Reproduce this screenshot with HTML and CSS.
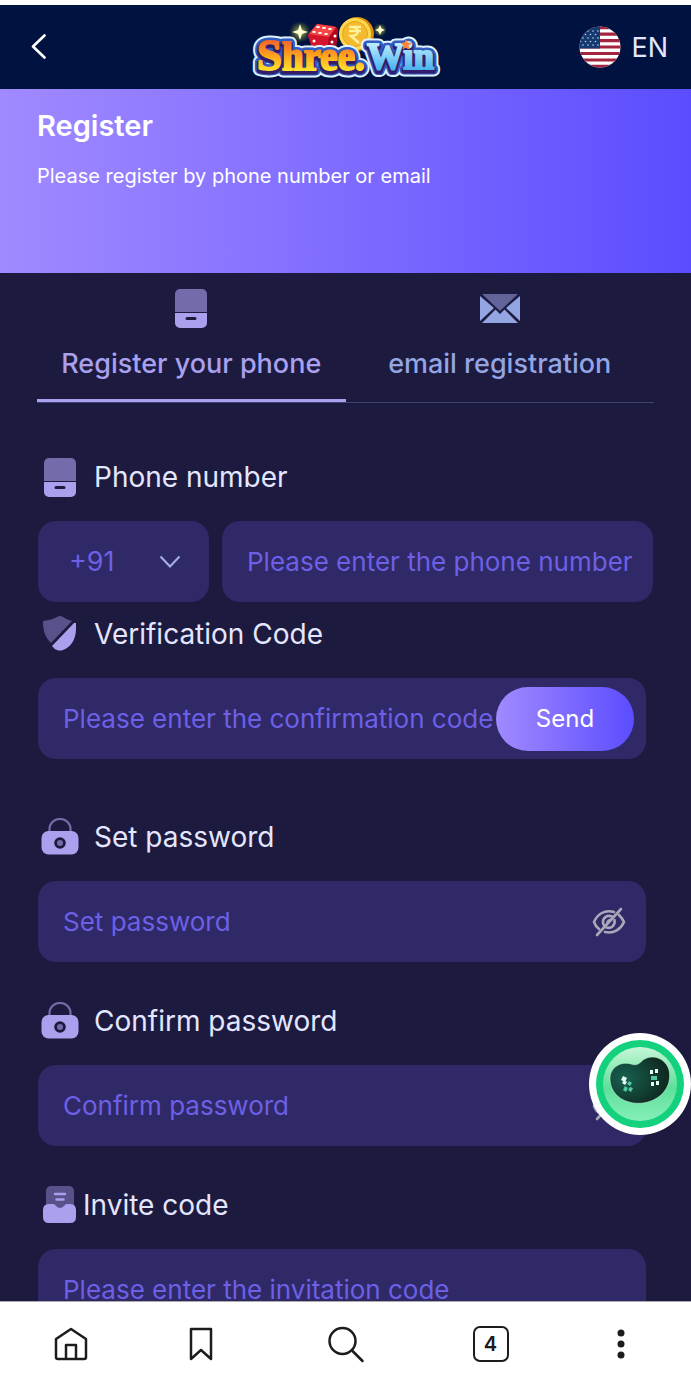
FILE: index.html
```html
<!DOCTYPE html>
<html lang="en">
<head>
<meta charset="utf-8">
<meta name="viewport" content="width=device-width, initial-scale=1">
<title>Register</title>
<link rel="stylesheet" href="styles.css">
</head>
<body>
<svg class="defs" aria-hidden="true">
  <symbol id="phone" viewBox="0 0 32 39">
    <path d="M0 23V5a5 5 0 0 1 5-5h22a5 5 0 0 1 5 5v18z" fill="#736cab"/>
    <path fill-rule="evenodd" d="M0 24h32v10a5 5 0 0 1-5 5H5a5 5 0 0 1-5-5zM12 28a1.500 1.500 0 0 0 0 3h8a1.500 1.500 0 0 0 0-3z" fill="#a9a0ee"/>
  </symbol>
  <symbol id="lock" viewBox="0 0 38 38">
    <path d="M8.500 16v-5a10 10 0 0 1 10-10h1a10 10 0 0 1 10 10v5" fill="none" stroke="#736cab" stroke-width="2.200"/>
    <rect x="0.500" y="13" width="37" height="23.500" rx="7" fill="#a9a0ee"/>
    <circle cx="19" cy="25" r="5.800" fill="#1c1a3e"/>
    <circle cx="19" cy="25" r="3" fill="#736cab"/>
  </symbol>
  <symbol id="eye-off" viewBox="0 0 34 30">
    <g fill="none" stroke="#aaa8b8" stroke-width="2.600" stroke-linecap="round">
      <path d="M22 5C12 2 5 8 2 15c1 3 2.500 5 5 7M27 8c2 2 4 4.500 5 7-3 7-10 12-19 10"/>
      <path d="M20 9.500c-5-2-9.500 1.500-9 6 0 1 .5 2 1 3M22.500 13c1 5-3 9-8 7.500M19 13c-2 0-3.500 1-3.500 3"/>
      <path d="M29 2 5 28"/>
    </g>
  </symbol>
</svg>
<header class="topbar">
  <button class="back" type="button" aria-label="Back">
    <svg width="16" height="28" viewBox="0 0 16 28"><path d="M14.500 2.500 3 13.500l11.500 11" fill="none" stroke="#fff" stroke-width="2.600" stroke-linecap="round" stroke-linejoin="round"/></svg>
  </button>
  <svg class="logo" width="192" height="68" viewBox="250 12 192 68" role="img" aria-label="Shree.Win">
    <defs>
      <linearGradient id="gold" x1="0" y1="0" x2="0" y2="1"><stop offset="0.200" stop-color="#f5642a"/><stop offset="0.500" stop-color="#ffa01c"/><stop offset="0.800" stop-color="#ffe02c"/></linearGradient>
      <linearGradient id="ice" x1="0" y1="0" x2="0" y2="1"><stop offset="0.200" stop-color="#b9ecff"/><stop offset="0.800" stop-color="#4db4ef"/></linearGradient>
      <radialGradient id="glow"><stop offset="0" stop-color="#e8f060" stop-opacity="0.800"/><stop offset="1" stop-color="#8a9a20" stop-opacity="0"/></radialGradient>
    </defs>
    <circle cx="300" cy="31" r="11" fill="url(#glow)"/>
    <path d="m300 23 2 6 6 2-6 2-2 6-2-6-6-2 6-2z" fill="#ffffd0"/>
    <circle cx="380" cy="29" r="7" fill="url(#glow)"/>
    <path d="m380 24 1.500 3.500L385 29l-3.500 1.500L380 34l-1.500-3.500L375 29l3.500-1.500z" fill="#ffffd0"/>
    <circle cx="357" cy="33" r="17" fill="#d98b12"/>
    <circle cx="355" cy="33" r="16" fill="#ffd84b"/>
    <circle cx="355" cy="33" r="12.500" fill="#f5bb2e" stroke="#e5a320"/>
    <path d="M349 26h12M349 30h12M351 26c9 0 9 9 0 9l8 7" fill="none" stroke="#fff29b" stroke-width="2.500"/>
    <path d="m317 23 16 2q5 1 5 5l-2 17h-24l-4-12q0-2 2-4z" fill="#d6152b"/>
    <path d="m317 23 19 3-7 10-20-3z" fill="#f34746"/>
    <path d="m329 36 7-9q3 1 2 5l-3 15h-8z" fill="#ad0820"/>
    <g fill="#fff"><ellipse cx="318" cy="26" rx="2" ry="1"/><ellipse cx="324" cy="27" rx="2" ry="1"/><ellipse cx="330" cy="28" rx="2" ry="1"/><ellipse cx="314" cy="31" rx="2" ry="1"/><ellipse cx="320" cy="32" rx="2" ry="1"/><ellipse cx="326" cy="33" rx="2" ry="1"/><circle cx="335" cy="35" r="1.500"/><circle cx="332" cy="41" r="1.500"/><circle cx="314" cy="40" r="1.500"/></g>
    <g class="wordmark wordmark-edge"><text x="257" y="70"><tspan class="initial">S</tspan>hree.</text><text class="blue" x="367" y="69">Win</text></g>
    <g class="wordmark wordmark-ring"><text x="257" y="70"><tspan class="initial">S</tspan>hree.</text><text class="blue" x="367" y="69">Win</text></g>
    <g class="wordmark wordmark-shade"><text x="257" y="71"><tspan class="initial">S</tspan>hree.</text><text class="blue" x="367" y="70">Win</text></g>
    <g class="wordmark wordmark-face" aria-hidden="true"><text x="257" y="69" fill="url(#gold)" stroke="url(#gold)"><tspan class="initial">S</tspan>hree.</text><text class="blue" x="367" y="68" fill="url(#ice)" stroke="url(#ice)">Win</text></g>
    <path d="m406 38 1.500 3.500 4 .5-3 2.500 1 4-3.500-2-3.500 2 1-4-3-2.500 4-.5z" fill="#ff8430"/>
  </svg>
  <button class="lang" type="button">
    <svg width="42" height="42" viewBox="0 0 42 42" aria-hidden="true">
      <defs><clipPath id="disc"><circle cx="21" cy="21" r="20.500"/></clipPath></defs>
      <g clip-path="url(#disc)">
        <path fill="#fff" d="M0 0h42v42H0z"/>
        <path stroke="#a3243f" stroke-width="3.200" d="M0 1.600h42M0 8.100h42M0 14.600h42M0 21h42M0 27.500h42M0 34h42M0 40.400h42"/>
        <path fill="#143a70" d="M0 0h21v22.500H0z"/>
        <path stroke="#c6d8ee" stroke-width="1.600" stroke-linecap="round" stroke-dasharray="0 5" d="M4 5h16M6.500 8.500H20M4 12h16M1.500 15.500H20M4 19h16"/>
      </g>
    </svg>
    <span>EN</span>
  </button>
</header>
<main class="page">
  <section class="banner">
    <h1>Register</h1>
    <p>Please register by phone number or email</p>
  </section>
  <nav class="tabs" aria-label="Registration method">
    <button class="tab tab-active" type="button">
      <svg width="32" height="39" aria-hidden="true"><use href="#phone"/></svg>
      <span>Register your phone</span>
    </button>
    <button class="tab" type="button">
      <svg width="40" height="39" viewBox="0 0 40 39" aria-hidden="true">
        <path d="M2 5h36L20 22z" fill="#626398"/>
        <path d="M0 7v25l14-13zM40 7v25L26 19zM2 34l13.500-13.500L20 25l4.500-4.500L38 34z" fill="#93a5e3"/>
      </svg>
      <span>email registration</span>
    </button>
  </nav>
  <form class="form">
    <div class="group">
      <label class="label" for="tel"><svg width="38" height="39" viewBox="0 0 38 39" aria-hidden="true"><use href="#phone" x="3" width="32" height="39"/></svg>Phone number</label>
      <div class="phone-row">
        <div class="code">
          <select aria-label="Country code"><option>+91</option></select>
          <svg width="22" height="14" viewBox="0 0 22 14" aria-hidden="true"><path d="m1.500 1.500 9.500 10 9.500-10" fill="none" stroke="#a5afe8" stroke-width="2"/></svg>
        </div>
        <div class="field"><input id="tel" type="tel" placeholder="Please enter the phone number"></div>
      </div>
    </div>
    <div class="group group-code">
      <label class="label" for="otp"><svg width="38" height="38" viewBox="0 0 38 38" aria-hidden="true">
        <path d="M2 6c6-1 11-2 14-4q3-2 6 0c3 2 6 3 9 4L10 28C4 22 2 16 2 6z" fill="#57528a"/>
        <path d="M33 8h2v6c0 12-7 19-13 21q-3 1-6 0-3-1-5-4z" fill="#a9a0ee"/>
      </svg>Verification Code</label>
      <div class="field field-send"><input id="otp" type="text" placeholder="Please enter the confirmation code"><button class="send" type="button">Send</button></div>
    </div>
    <div class="group">
      <label class="label" for="pass"><svg width="38" height="38" aria-hidden="true"><use href="#lock"/></svg>Set password</label>
      <div class="field"><input id="pass" type="password" placeholder="Set password"><button class="reveal" type="button" aria-label="Show password"><svg width="34" height="30"><use href="#eye-off"/></svg></button></div>
    </div>
    <div class="group">
      <label class="label" for="pass2"><svg width="38" height="38" aria-hidden="true"><use href="#lock"/></svg>Confirm password</label>
      <div class="field"><input id="pass2" type="password" placeholder="Confirm password"><button class="reveal" type="button" aria-label="Show password"><svg width="34" height="30"><use href="#eye-off"/></svg></button></div>
    </div>
    <div class="group">
      <label class="label label-tight" for="invite"><svg width="38" height="38" viewBox="0 0 38 38" aria-hidden="true">
        <rect x="5" y="0" width="28" height="30" rx="5" fill="#57528a"/>
        <path d="M2 24q0-6 6-6h4q2 0 3 2 4 4 8 0 1-2 3-2h3q6 0 6 6v7q0 6-6 6H8q-6 0-6-6z" fill="#a9a0ee"/>
        <path d="M14 8h10M15.500 13.500h7" stroke="#a9a0ee" stroke-width="2.400" stroke-linecap="round"/>
      </svg>Invite code</label>
      <div class="field"><input id="invite" type="text" placeholder="Please enter the invitation code"></div>
    </div>
  </form>
</main>
<button class="chat" type="button" aria-label="Open assistant">
  <svg width="102" height="102" viewBox="0 0 102 102">
    <defs>
      <linearGradient id="mint" x1="0" y1="0" x2="0" y2="1"><stop offset="0" stop-color="#c6f7d6"/><stop offset="0.550" stop-color="#5fdf9b"/><stop offset="1" stop-color="#85f0b8"/></linearGradient>
      <radialGradient id="bean" cx="0.250" cy="0.450" r="0.700"><stop offset="0" stop-color="#17604f"/><stop offset="1" stop-color="#0f2b22"/></radialGradient>
    </defs>
    <circle cx="51" cy="51" r="51" fill="#fff"/>
    <circle cx="51" cy="51" r="44" fill="#14d17e"/>
    <circle cx="51" cy="51" r="37" fill="url(#mint)"/>
    <path d="M21 44c1-10 11-16 21-13 5 2 8 0 12-4 10-7 23-1 26 10 3 14-5 26-18 31-18 7-42-2-41-24z" fill="url(#bean)" stroke="#c9ffe0" stroke-opacity="0.500"/>
    <g fill="#e6fff4"><path d="m34 43 4 2-2 4-4-2zM38 49l-2 3-3-2 2-3zM61 37h3v4h-3zM66 36h3v4h-3zM62 49h3v4h-3zM67 48h3v4h-3z"/></g>
    <g fill="#50c9a5"><path d="m40 48 3 2-2 3-3-2zM36 53l3 2-2 4-3-2zM41 54l3 1-2 4-3-2zM62 43h6v4h-6z"/></g>
  </svg>
</button>
<nav class="bottom" aria-label="Browser">
  <button type="button" aria-label="Home"><svg width="34" height="34" viewBox="0 0 34 34"><path d="M2 12 17 2l15 10v18q0 2-2 2H4q-2 0-2-2zM12 32V18h10v14"/></svg></button>
  <button type="button" aria-label="Bookmarks"><svg width="24" height="34" viewBox="0 0 24 34"><path d="M2 2h20v30L12 23 2 32z"/></svg></button>
  <button type="button" aria-label="Search"><svg width="38" height="38" viewBox="0 0 38 38"><circle cx="15.500" cy="16" r="13"/><path d="m25.500 26 10 10"/></svg></button>
  <button type="button" aria-label="Tabs"><span class="count">4</span></button>
  <button type="button" aria-label="Menu"><svg class="dots" width="8" height="30" viewBox="0 0 8 30"><circle cx="4" cy="4" r="3.500"/><circle cx="4" cy="15" r="3.500"/><circle cx="4" cy="26" r="3.500"/></svg></button>
</nav>
</body>
</html>
```
FILE: styles.css
```css
* { box-sizing: border-box; }
body {
  margin: 0;
  height: 100vh;
  display: flex;
  flex-direction: column;
  border-top: 5px solid #fff;
  background: #1c1a3e;
  color: #e4e6ff;
  font-family: Inter, "Liberation Sans", sans-serif;
  font-size: 26px;
}
button, input, select { font: inherit; color: inherit; background: none; border: 0; margin: 0; padding: 0; }
button { cursor: pointer; }
svg { display: block; flex: none; }
.defs { position: absolute; width: 0; height: 0; }

.topbar {
  flex: none;
  height: 84px;
  display: grid;
  grid-template-columns: 1fr auto 1fr;
  align-items: center;
  padding: 0 23px;
  background: #00123f;
}
.back { justify-self: start; padding-left: 7px; }
.lang { justify-self: end; display: flex; align-items: center; gap: 10px; color: #e4e6ff; font-size: 27px; }
.wordmark { font-family: "Liberation Serif", serif; font-weight: 700; font-size: 39px; stroke-linejoin: round; }
.initial { font-size: 45px; }
.blue { font-size: 37px; }
.wordmark-edge { fill: #dff2ff; stroke: #dff2ff; stroke-width: 13px; }
.wordmark-ring { fill: #315cc0; stroke: #315cc0; stroke-width: 9px; }
.wordmark-shade { fill: #311d69; stroke: #311d69; stroke-width: 5px; }
.wordmark-face { stroke-width: 2px; }

.page { flex: 1; min-height: 0; overflow-y: auto; scrollbar-width: none; }
.banner {
  height: 184px;
  padding: 18px 37px;
  background: linear-gradient(90deg, #a18aff, #5b4dff);
  color: #fff;
}
.banner h1 { margin: 0 0 18px; font-size: 29px; line-height: 38px; font-weight: 600; }
.banner p { margin: 0; font-size: 20px; line-height: 26px; }

.tabs { display: flex; margin: 0 37px; border-bottom: 1px solid #414270; }
.tab {
  flex: 1;
  height: 129px;
  display: flex;
  flex-direction: column;
  align-items: center;
  padding-top: 16px;
  gap: 18px;
  font-size: 27px;
  line-height: 36px;
  font-weight: 500;
  color: #93a5e3;
  border-bottom: 3px solid transparent;
  white-space: nowrap;
}
.tab-active { color: #a9a0ee; border-color: #a9a0ee; }

.form { display: flex; flex-direction: column; gap: 39px; padding: 54px 38px 40px; }
.group { display: flex; flex-direction: column; gap: 24px; padding-right: 7px; }
.group:first-child { padding-right: 0; }
.group-code { margin: -27px 0 19px; }
.label { height: 40px; display: flex; align-items: center; gap: 15px; padding-left: 3px; font-size: 28px; }
.label-tight { gap: 4px; }
.phone-row { display: flex; gap: 13px; }
.code, .field { height: 81px; border-radius: 18px; background: #2f2967; }
.field { flex: 1 0 81px; min-width: 0; display: flex; align-items: center; padding: 0 20px 0 25px; }
.phone-row .field { padding-right: 12px; }
.field input { flex: 1; min-width: 0; height: 100%; outline: 0; }
.field input::placeholder { color: #6d60e6; opacity: 1; }
.code { flex: none; width: 171px; display: grid; align-items: center; }
.code select, .code svg { grid-area: 1 / 1; }
.code select { height: 100%; padding-left: 31px; appearance: none; color: #6d60e6; font-size: 27px; border-radius: 18px; }
.code svg { justify-self: end; margin-right: 28px; pointer-events: none; }
.field.field-send { padding-right: 12px; }
.send { width: 138px; height: 64px; border-radius: 32px; background: linear-gradient(90deg, #a18aff, #5b4dff); color: #fff; font-size: 24px; }

.chat { position: absolute; right: 0; bottom: 251px; }

.bottom { flex: none; height: 85px; display: grid; grid-template-columns: 141fr 119fr 171fr 119fr 141fr; background: #fff; border-top: 1px solid #aaa; }
.bottom button { display: grid; place-items: center; }
.bottom svg { fill: none; stroke: #1c1c1e; stroke-width: 2.5px; stroke-linejoin: round; stroke-linecap: round; }
.bottom .dots { fill: #1c1c1e; stroke: none; }
.count { display: grid; place-items: center; width: 36px; height: 36px; border: 2px solid #1c1c1e; border-radius: 7px; color: #1c1c1e; font-size: 20px; font-weight: 600; }
```
